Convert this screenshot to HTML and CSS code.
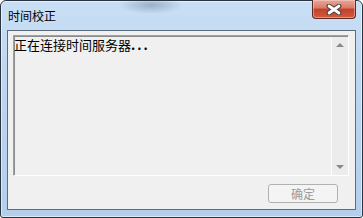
FILE: index.html
```html
<!DOCTYPE html>
<html lang="zh-CN">
<head>
    <meta charset="UTF-8">
    <title>时间校正</title>
    <link rel="stylesheet" href="styles.css">
</head>
<body>
<div class="window">
    <div class="titlebar">
        <span class="title">时间校正</span>
        <div class="close">
            <svg width="18" height="11" viewBox="0 0 18 11">
                <path d="M4 2 L14 9 M14 2 L4 9" stroke="#4a3b3a" stroke-width="4.8" stroke-linecap="round"/>
                <path d="M4 2 L14 9 M14 2 L4 9" stroke="#fff" stroke-width="2.8" stroke-linecap="round"/>
            </svg>
        </div>
    </div>
    <div class="client">
        <div class="log">
            <div class="log-text">正在连接时间服务器<span class="dots">...</span></div>
            <div class="scrollbar">
                <span class="arrow up"></span>
                <span class="arrow down"></span>
            </div>
        </div>
        <div class="actions">
            <button class="btn" disabled>确定</button>
        </div>
    </div>
</div>
</body>
</html>
```

FILE: styles.css
```css
*{
    margin: 0;
    padding: 0;
    box-sizing: border-box;
}
body{
    width: 363px;
    height: 218px;
    overflow: hidden;
    background: #fff;
}
.window{
    width: 363px;
    height: 218px;
    display: flex;
    flex-direction: column;
    border: 1px solid #2b3542;
    border-radius: 6px 6px 3px 3px;
    background: linear-gradient(#c9dff5, #bcd5f0 40%, #b3cfec);
    box-shadow: inset 0 0 0 1px rgba(255,255,255,0.55);
}
.titlebar{
    height: 29px;
    display: flex;
    justify-content: space-between;
    align-items: flex-start;
    background: radial-gradient(ellipse 32px 9px at 150px 4px, rgba(110,130,155,0.5), rgba(110,130,155,0));
}
.title{
    margin: 7px 0 0 7px;
    font: 12px/16px "Noto Sans CJK SC", sans-serif;
    color: #000;
}
.close{
    width: 44px;
    height: 19px;
    margin: -1px 6px 0 0;
    border: 1px solid #5b2a24;
    border-top: none;
    border-radius: 0 0 4px 4px;
    background: linear-gradient(#e9a898, #d77a66 45%, #c3402a 50%, #d45a3e);
    box-shadow: inset 0 0 0 1px rgba(255,220,210,0.45);
    display: flex;
    align-items: center;
    justify-content: center;
}
.client{
    flex: 1;
    margin: 0 6px 7px 6px;
    border: 1px solid #5e6d7e;
    background: #f0f0f0;
    padding: 4px 6px 0 5px;
    display: flex;
    flex-direction: column;
}
.log{
    height: 141px;
    display: flex;
    border: 1px solid;
    border-color: #a0a0a0 #fff #fff #a0a0a0;
    box-shadow: inset 1px 1px 0 #8c8c8c;
    background: #f0f0f0;
}
.log-text{
    flex: 1;
    padding: 1px 0 0 0;
    font: 13px/15px "Noto Sans CJK SC", sans-serif;
    color: #000;
}
.dots{
    letter-spacing: 2px;
    font-weight: bold;
}
.scrollbar{
    width: 17px;
    margin: 1px 0 0 0;
    border-left: 1px solid #fbfbfb;
    background: #ececec;
    display: flex;
    flex-direction: column;
    justify-content: space-between;
    align-items: center;
    padding: 6px 0 6px 0;
}
.arrow{
    width: 0;
    height: 0;
    border-left: 4px solid transparent;
    border-right: 4px solid transparent;
}
.arrow.up{
    border-bottom: 4px solid #8a8a8a;
}
.arrow.down{
    border-top: 4px solid #8a8a8a;
}
.actions{
    display: flex;
    justify-content: flex-end;
    padding: 8px 11px 0 0;
}
.btn{
    width: 70px;
    height: 19px;
    border: 1px solid #adb2b5;
    border-radius: 3px;
    background: #f4f4f4;
    font: 12px/15px "Noto Sans CJK SC", sans-serif;
    color: #9a9a9a;
}
```
